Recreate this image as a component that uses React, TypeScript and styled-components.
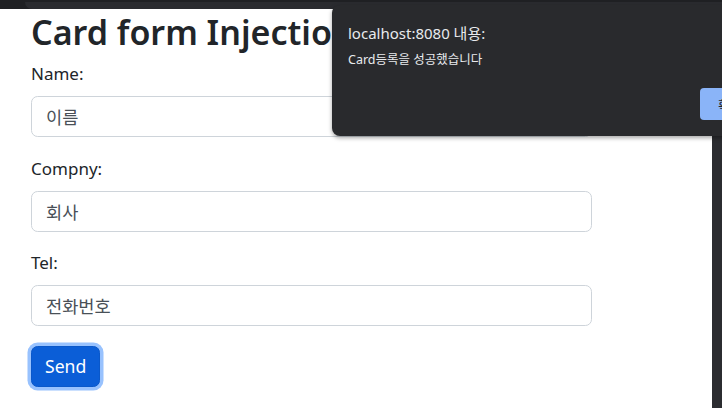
import styled, { createGlobalStyle } from 'styled-components';

const GlobalStyle = createGlobalStyle`
    html, body {
        margin: 0;
        padding: 0;
        background: #ffffff;
        overflow: hidden;
    }
    * {
        box-sizing: border-box;
    }
`;

const Frame = styled.div`
    position: relative;
    width: 722px;
    height: 408px;
    overflow: hidden;
    display: flex;
    flex-direction: column;
    font-family: 'Segoe UI', 'Noto Sans', 'Noto Sans CJK KR', sans-serif;
    color: #212529;
`;

const TopBar = styled.div`
    height: 9px;
    background: #1f2023;
    display: flex;
    padding-left: 25px;
`;

const TopTab = styled.div`
    flex: 1;
    background: #2a2b2f;
    border-bottom-left-radius: 8px;
    margin-top: 2px;
`;

const Body = styled.div`
    flex: 1;
    display: flex;
`;

const Page = styled.main`
    flex: 1;
    padding: 3px 0 0 31px;
`;

const SideStrip = styled.div`
    width: 10px;
    background: #2b2c30;
`;

const Title = styled.h1`
    margin: 0 0 9px;
    font-size: 34px;
    font-weight: 600;
    line-height: 40px;
    white-space: nowrap;
`;

const Form = styled.form`
    width: 561px;
`;

const Group = styled.div`
    margin-bottom: 18.5px;
`;

const Label = styled.label`
    display: block;
    font-size: 17px;
    line-height: 26px;
    margin-bottom: 9px;
`;

const Input = styled.input`
    display: block;
    width: 100%;
    height: 41px;
    padding: 0 14px;
    font-family: inherit;
    font-size: 17.6px;
    color: #495057;
    background: #fff;
    border: 1px solid #ced4da;
    border-radius: 6.6px;
    outline: none;
`;

const SendButton = styled.button`
    margin-top: 1px;
    height: 41px;
    padding: 0 13px;
    font-family: inherit;
    font-size: 17.6px;
    color: #fff;
    background: #0b5ed7;
    border: 1px solid #0a58ca;
    border-radius: 6.6px;
    box-shadow: 0 0 0 3.5px #98c2fe;
`;

const Alert = styled.div`
    position: absolute;
    left: 332px;
    top: 5px;
    width: 420px;
    height: 131px;
    background: #292a2d;
    border-radius: 8px 0 0 8px;
    box-shadow: 0 2px 4px rgba(0, 0, 0, 0.35);
    padding: 18px 0 0 16px;
    color: #e8eaed;
`;

const AlertTitle = styled.div`
    font-size: 15px;
    line-height: 20px;
`;

const AlertMessage = styled.div`
    margin-top: 9px;
    font-size: 12.5px;
    line-height: 16px;
`;

const AlertActions = styled.div`
    display: flex;
    padding-left: 352px;
    margin-top: 20px;
`;

const AlertButton = styled.button`
    flex-shrink: 0;
    height: 32px;
    padding: 0 18px;
    font-family: inherit;
    font-size: 13px;
    white-space: nowrap;
    color: #202124;
    background: #8ab4f8;
    border: none;
    border-radius: 4px;
`;

const fields = [
    { id: 'name', label: 'Name:', value: '이름' },
    { id: 'company', label: 'Compny:', value: '회사' },
    { id: 'tel', label: 'Tel:', value: '전화번호' },
];

function App() {
    return (
        <>
            <GlobalStyle />
            <Frame>
                <TopBar>
                    <TopTab />
                </TopBar>
                <Body>
                    <Page>
                        <Title>Card form Injection</Title>
                        <Form onSubmit={(e) => e.preventDefault()}>
                            {fields.map((f) => (
                                <Group key={f.id}>
                                    <Label htmlFor={f.id}>{f.label}</Label>
                                    <Input id={f.id} defaultValue={f.value} />
                                </Group>
                            ))}
                            <SendButton type="submit">Send</SendButton>
                        </Form>
                    </Page>
                    <SideStrip />
                </Body>
                <Alert>
                    <AlertTitle>localhost:8080 내용:</AlertTitle>
                    <AlertMessage>Card등록을 성공했습니다</AlertMessage>
                    <AlertActions>
                        <AlertButton>확인</AlertButton>
                    </AlertActions>
                </Alert>
            </Frame>
        </>
    );
}

export default App;
